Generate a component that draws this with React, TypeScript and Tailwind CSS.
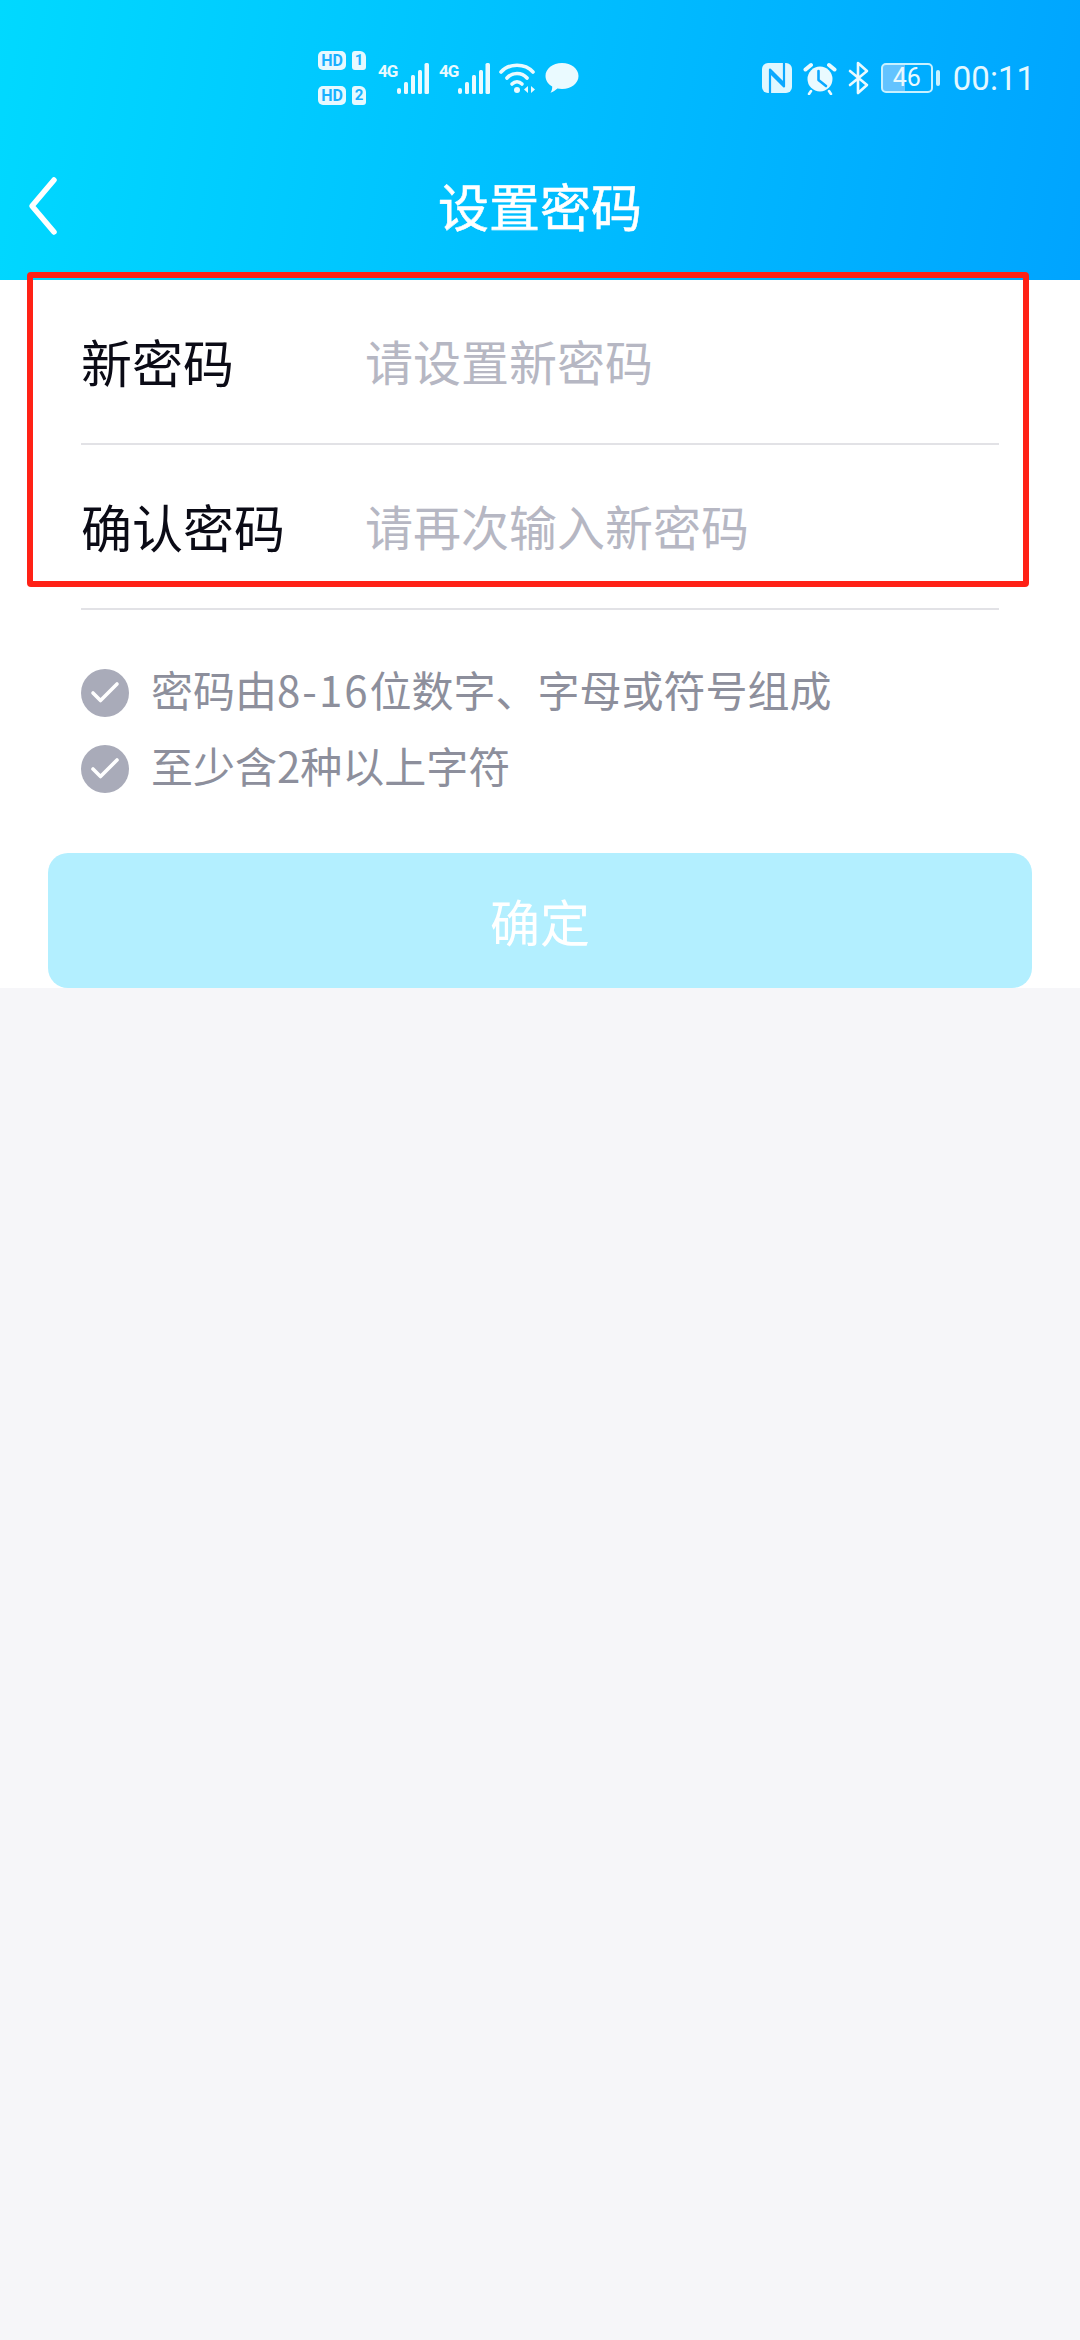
import React from 'react';
import { Check } from 'lucide-react';

const cjk = 'font-["Noto_Sans_CJK_SC","Noto_Sans",sans-serif]';

const SimBadge = ({ slot }: { slot: string }) => (
  <div className='flex h-[19px] items-stretch gap-[6px] font-["Roboto",sans-serif] text-[16px] leading-[19px] font-bold text-[#18b0ff]'>
    <span className="w-[28px] rounded-[5px] bg-[#e6f9ff] text-center">HD</span>
    <span className="w-[14px] rounded-[3px] rounded-tr-[6px] bg-[#e6f9ff] text-center text-[15px]">{slot}</span>
  </div>
);

const Signal = () => (
  <div className="flex items-start">
    <span className='w-[18px] pt-[1px] font-["Roboto",sans-serif] text-[17px] leading-[15px] font-bold tracking-[-1px] text-[#eafaff]'>4G</span>
    <svg width="34" height="32" viewBox="0 0 34 32" className="-mt-[1px]" fill="#eafaff">
      <rect x="1" y="26" width="4" height="6" rx="2" />
      <rect x="8" y="20" width="4" height="12" rx="1.500" />
      <rect x="15" y="13" width="4" height="19" rx="1.500" />
      <rect x="22" y="8" width="4" height="24" rx="1.500" />
      <rect x="28.500" y="1" width="4.500" height="31" rx="1.500" />
    </svg>
  </div>
);

const Wifi = () => (
  <svg width="38" height="32" viewBox="0 0 38 32" fill="none" stroke="#eafaff" strokeWidth="3.600" strokeLinecap="round">
    <path d="M2 10C10 1 26 1 34 10" />
    <path d="M8 16C13 10 23 10 28 16" />
    <path d="M13 22C16 19 20 19 23 22" />
    <circle cx="18" cy="28" r="3" fill="#eafaff" stroke="none" />
    <path d="M29 24V31L25 27.500ZM32 24V31L36 27.500Z" fill="#eafaff" stroke="none" />
  </svg>
);

const Bubble = () => (
  <svg width="34" height="30" viewBox="0 0 34 30" fill="#eafaff">
    <path d="M17 0C26.400 0 33.500 5.800 33.500 13C33.500 20.200 26.400 26 17 26C15.400 26 13.800 25.800 12.300 25.500C10.500 27.300 8 29 5.500 29.800C6.800 27.800 7.300 25.700 7.200 23.500C3 21.100 0.500 17.300 0.500 13C0.500 5.800 7.600 0 17 0Z" />
  </svg>
);

const Nfc = () => (
  <svg width="30" height="30" viewBox="0 0 30 30">
    <rect width="30" height="30" rx="6" fill="#dff7ff" />
    <path d="M8 30V6.500L21.500 20M22 0V23.500L8.500 10" fill="none" stroke="#0aa8ff" strokeWidth="2.200" strokeLinejoin="round" />
  </svg>
);

const Alarm = () => (
  <svg width="34" height="34" viewBox="0 0 34 34" fill="none">
    <circle cx="17" cy="18" r="12.500" fill="#eafaff" />
    <path d="M15.500 10V19L23 25" stroke="#0aa8ff" strokeWidth="2.600" strokeLinecap="round" strokeLinejoin="round" />
    <path d="M2.500 8.500L8 4M31.500 8.500L26 4" stroke="#eafaff" strokeWidth="4" strokeLinecap="round" />
    <path d="M8 30L6 33M26 30L28 33" stroke="#eafaff" strokeWidth="2.600" strokeLinecap="round" />
  </svg>
);

const Bluetooth = () => (
  <svg width="22" height="34" viewBox="0 0 22 34" fill="none" stroke="#eafaff" strokeWidth="2.600" strokeLinecap="round" strokeLinejoin="round">
    <path d="M2 10L19 24L10 32V2L19 10L2 24" />
  </svg>
);

const Battery = () => (
  <div className="flex items-center gap-[3px]">
    <div className='h-[30px] w-[52px] rounded-[5px] border-[2px] border-[#c8f1ff] bg-[linear-gradient(90deg,#63c3ff_0%,#63c3ff_46%,transparent_46%)] text-center font-["Roboto",sans-serif] text-[25px] leading-[26px] font-normal text-[#eafaff]'>
      46
    </div>
    <span className="h-[16px] w-[4px] rounded-full bg-[#c8f1ff]" />
  </div>
);

const StatusBar = () => (
  <div className="flex h-[156px] items-center justify-between pr-[45px] pl-[318px]">
    <div className="flex items-center gap-[8px]">
      <div className="mr-[4px] flex flex-col gap-[16px]">
        <SimBadge slot="1" />
        <SimBadge slot="2" />
      </div>
      <Signal />
      <div className="ml-[1px]">
        <Signal />
      </div>
      <Wifi />
      <Bubble />
    </div>
    <div className="flex items-center gap-[11px]">
      <Nfc />
      <Alarm />
      <Bluetooth />
      <Battery />
      <span className='ml-[2px] font-["Roboto",sans-serif] text-[33px] leading-none font-normal text-[#e4f8ff]'>00:11</span>
    </div>
  </div>
);

const Field = ({ label, hint }: { label: string; hint: string }) => (
  <div className="flex h-[165px] items-center border-b-2 border-[#e2e2e6]">
    <span className="w-[284px] pb-[1px] text-[51px] leading-none text-[#0b0b16]">{label}</span>
    <span className="pb-[3px] text-[48px] leading-none text-[#b6b7c3]">{hint}</span>
  </div>
);

const Rule = ({ children }: { children: React.ReactNode }) => (
  <div className="flex h-[76px] items-center gap-[22px]">
    <span className="flex h-[48px] w-[48px] items-center justify-center rounded-full bg-[#a9abb9]">
      <Check size={36} strokeWidth={2.400} className="text-white" />
    </span>
    <span className="pb-[8px] text-[42px] leading-none text-[#8d8f9c]">{children}</span>
  </div>
);

export default function App() {
  return (
    <div className={`relative flex h-[2340px] w-[1080px] flex-col bg-[#f6f6f9] ${cjk}`}>
      <header className="h-[280px] bg-linear-[100deg,#00d9ff,#00a4ff]">
        <StatusBar />
        <div className="relative flex h-[104px] items-center justify-center">
          {/* back arrow */}
          <svg width="34" height="60" viewBox="0 0 34 60" className="absolute top-[20px] left-[26px]" fill="none" stroke="#ffffff" strokeWidth="5.500" strokeLinecap="round" strokeLinejoin="round">
            <path d="M28 4L6 30L28 56" />
          </svg>
          <h1 className="pb-[6px] text-[51px] leading-none text-white [-webkit-text-stroke:0.6px_white]">设置密码</h1>
        </div>
      </header>

      <main className="flex h-[708px] flex-col bg-white">
        <div className="mx-[81px]">
          <Field label="新密码" hint="请设置新密码" />
          <Field label="确认密码" hint="请再次输入新密码" />
        </div>
        <div className="mt-[45px] ml-[81px]">
          <Rule>
            密码由<span className="tracking-[2px]">8-16</span>位数字、字母或符号组成
          </Rule>
          <Rule>至少含2种以上字符</Rule>
        </div>
        <button className="mx-[48px] mt-[46px] flex h-[135px] items-center justify-center rounded-[20px] bg-[#b3efff] text-[50px] text-white">
          确定
        </button>
      </main>

      {/* highlight frame drawn over the two fields */}
      <div className="absolute top-[272px] left-[27px] h-[315px] w-[1002px] rounded-[4px] border-[6px] border-[#ff2116]" />
    </div>
  );
}
